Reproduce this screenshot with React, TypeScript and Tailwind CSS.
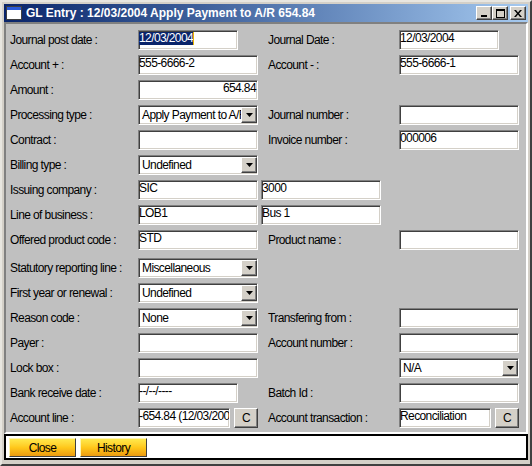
const sunken =
  "h-[20px] shrink-0 overflow-hidden bg-white border border-t-[#808080] border-l-[#808080] border-b-white border-r-white shadow-[inset_1px_1px_0_#404040,inset_-1px_-1px_0_#d4d0c8]";
const raised =
  "bg-[#d4d0c8] border border-t-white border-l-white border-b-[#404040] border-r-[#404040] shadow-[inset_-1px_-1px_0_#808080]";

type Ctrl =
  | { t: "input"; v?: string; w?: string; right?: boolean; sel?: boolean }
  | { t: "select"; v: string }
  | { t: "inputC"; v: string };

type Row = {
  label: string;
  left: Ctrl;
  rl?: string;
  right?: Ctrl;
  extra?: string;
  mt?: boolean;
};

const rows: Row[] = [
  { label: "Journal post date :", left: { t: "input", v: "12/03/2004", w: "w-[100px]", sel: true }, rl: "Journal Date :", right: { t: "input", v: "12/03/2004", w: "w-[100px]" } },
  { label: "Account + :", left: { t: "input", v: "555-6666-2" }, rl: "Account - :", right: { t: "input", v: "555-6666-1" } },
  { label: "Amount :", left: { t: "input", v: "654.84", right: true } },
  { label: "Processing type :", left: { t: "select", v: "Apply Payment to A/R" }, rl: "Journal number :", right: { t: "input" } },
  { label: "Contract :", left: { t: "input" }, rl: "Invoice number :", right: { t: "input", v: "000006" } },
  { label: "Billing type :", left: { t: "select", v: "Undefined" } },
  { label: "Issuing company :", left: { t: "input", v: "SIC" }, extra: "3000" },
  { label: "Line of business :", left: { t: "input", v: "LOB1" }, extra: "Bus 1" },
  { label: "Offered product code :", left: { t: "input", v: "STD" }, rl: "Product name :", right: { t: "input" } },
  { label: "Statutory reporting line :", left: { t: "select", v: "Miscellaneous" }, mt: true },
  { label: "First year or renewal :", left: { t: "select", v: "Undefined" } },
  { label: "Reason code :", left: { t: "select", v: "None" }, rl: "Transfering from :", right: { t: "input" } },
  { label: "Payer :", left: { t: "input" }, rl: "Account number :", right: { t: "input" } },
  { label: "Lock box :", left: { t: "input" }, rl: "", right: { t: "select", v: "N/A" } },
  { label: "Bank receive date :", left: { t: "input", v: "--/--/----", w: "w-[100px]" }, rl: "Batch Id :", right: { t: "input" } },
  { label: "Account line :", left: { t: "inputC", v: "-654.84 (12/03/2004)" }, rl: "Account transaction :", right: { t: "inputC", v: "Reconciliation" } },
];

const Field = ({ c }: { c: Ctrl }) => {
  if (c.t === "select") {
    return (
      <div className={`${sunken} flex w-[120px] items-center`}>
        <div className="flex-1 overflow-hidden whitespace-nowrap pl-[3px] leading-[16px]">{c.v}</div>
        <div className={`${raised} flex h-[16px] w-[16px] shrink-0 items-center justify-center`}>
          <svg width="7" height="4" viewBox="0 0 7 4">
            <path d="M0 0h7L3.5 4z" fill="#000" />
          </svg>
        </div>
      </div>
    );
  }
  if (c.t === "inputC") {
    return (
      <div className="flex w-[120px] items-center">
        <div className={`${sunken} w-[92px] whitespace-nowrap pt-[1px] leading-[12px]`}>{c.v}</div>
        <div className={`${raised} ml-[4px] flex h-[20px] w-[24px] items-center justify-center`}>C</div>
      </div>
    );
  }
  return (
    <div
      className={`${sunken} ${c.w ?? "w-[120px]"} whitespace-nowrap pt-[1px] leading-[12px] ${c.right ? "pr-[1px] text-right" : ""}`}
    >
      {c.sel ? (
        <span className="inline-flex items-start">
          <span className="bg-[#0a246a] leading-[13px] text-white">{c.v}</span>
          <span className="h-[13px] w-[1px] bg-[#e8b800]" />
        </span>
      ) : (
        c.v
      )}
    </div>
  );
};

const TitleButton = ({ children, className }: { children: React.ReactNode; className?: string }) => (
  <div className={`${raised} flex h-[14px] w-[16px] items-center justify-center ${className ?? ""}`}>{children}</div>
);

const App = () => {
  return (
    <div className="flex h-[466px] w-[532px] flex-col border-2 border-t-[#e8e6e0] border-l-[#e8e6e0] border-b-[#404040] border-r-[#404040] bg-[#d4d0c8] p-[2px] font-['Liberation_Sans',Arial,sans-serif] text-[12px] tracking-[-0.6px] text-black">
      {/* title bar */}
      <div className="flex h-[18px] shrink-0 items-center bg-linear-to-r from-[#0a246a] to-[#a6caf0] pl-[2px] pr-[2px]">
        <svg width="16" height="14" viewBox="0 0 16 14" className="shrink-0">
          <rect x="0.5" y="0.5" width="15" height="13" fill="#fff" stroke="#404040" />
          <rect x="1" y="1" width="14" height="3" fill="#2a5ad8" />
        </svg>
        <div className="ml-[4px] flex-1 whitespace-nowrap text-[12px] font-bold tracking-normal text-white">
          GL Entry : 12/03/2004 Apply Payment to A/R 654.84
        </div>
        <TitleButton>
          <svg width="8" height="8" viewBox="0 0 8 8">
            <rect x="1" y="6" width="6" height="2" fill="#000" />
          </svg>
        </TitleButton>
        <TitleButton>
          <svg width="9" height="9" viewBox="0 0 9 9">
            <rect x="0.5" y="0.5" width="8" height="8" fill="none" stroke="#000" />
            <rect x="0" y="0" width="9" height="2" fill="#000" />
          </svg>
        </TitleButton>
        <TitleButton className="ml-[2px]">
          <svg width="8" height="7" viewBox="0 0 8 7">
            <path d="M0 0h2l2 2.5L6 0h2L5 3.5 8 7H6L4 4.5 2 7H0l3-3.5z" fill="#000" />
          </svg>
        </TitleButton>
      </div>

      {/* form */}
      <div className="flex flex-1 flex-col gap-[5px] border-2 border-t-[#808080] border-l-[#808080] border-b-white border-r-white bg-[#c0c0c0] pl-[4px] pt-[6px]">
        {rows.map((r) => (
          <div key={r.label} className={`flex h-[20px] items-center ${r.mt ? "mt-[3px]" : ""}`}>
            <div className="w-[128px] shrink-0 whitespace-nowrap leading-none">{r.label}</div>
            <div className="w-[120px] shrink-0">
              <Field c={r.left} />
            </div>
            {r.extra ? (
              <div className="ml-[3px]">
                <Field c={{ t: "input", v: r.extra }} />
              </div>
            ) : (
              <>
                <div className="ml-[10px] w-[131px] shrink-0 whitespace-nowrap leading-none">{r.rl}</div>
                {r.right && <Field c={r.right} />}
              </>
            )}
          </div>
        ))}
      </div>

      {/* button strip */}
      <div className="mb-[2px] flex h-[26px] shrink-0 items-start gap-[4px] border-2 border-black bg-white pl-[3px] pt-[2px]">
        {["Close", "History"].map((b) => (
          <div
            key={b}
            className="flex h-[19px] w-[67px] items-center justify-center border border-t-[#fff4b0] border-l-[#fff4b0] border-b-[#404040] border-r-[#404040] bg-linear-to-b from-[#ffe94a] via-[#ffc81a] to-[#ec9a10] leading-none"
          >
            {b}
          </div>
        ))}
      </div>
    </div>
  );
};

export default App;
